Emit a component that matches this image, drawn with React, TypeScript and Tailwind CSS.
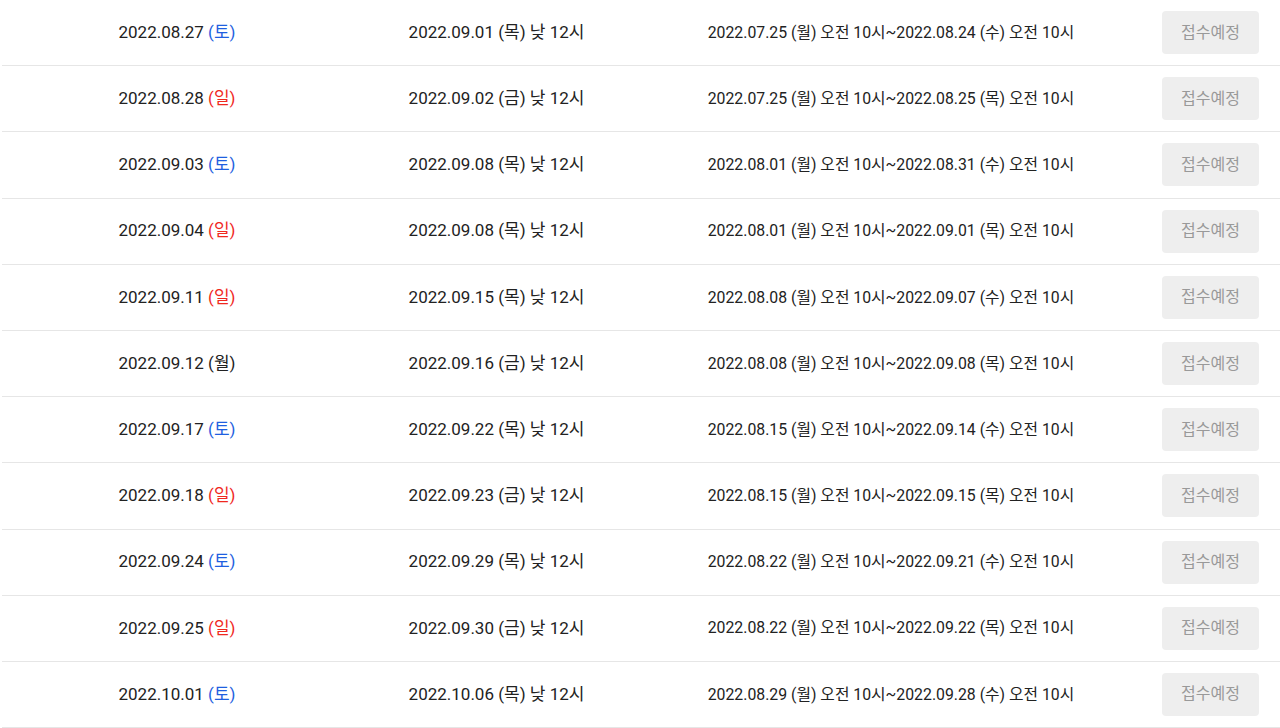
const rows = [
  ["2022.08.27", "토", "2022.09.01 (목) 낮 12시", "2022.07.25 (월) 오전 10시~2022.08.24 (수) 오전 10시"],
  ["2022.08.28", "일", "2022.09.02 (금) 낮 12시", "2022.07.25 (월) 오전 10시~2022.08.25 (목) 오전 10시"],
  ["2022.09.03", "토", "2022.09.08 (목) 낮 12시", "2022.08.01 (월) 오전 10시~2022.08.31 (수) 오전 10시"],
  ["2022.09.04", "일", "2022.09.08 (목) 낮 12시", "2022.08.01 (월) 오전 10시~2022.09.01 (목) 오전 10시"],
  ["2022.09.11", "일", "2022.09.15 (목) 낮 12시", "2022.08.08 (월) 오전 10시~2022.09.07 (수) 오전 10시"],
  ["2022.09.12", "월", "2022.09.16 (금) 낮 12시", "2022.08.08 (월) 오전 10시~2022.09.08 (목) 오전 10시"],
  ["2022.09.17", "토", "2022.09.22 (목) 낮 12시", "2022.08.15 (월) 오전 10시~2022.09.14 (수) 오전 10시"],
  ["2022.09.18", "일", "2022.09.23 (금) 낮 12시", "2022.08.15 (월) 오전 10시~2022.09.15 (목) 오전 10시"],
  ["2022.09.24", "토", "2022.09.29 (목) 낮 12시", "2022.08.22 (월) 오전 10시~2022.09.21 (수) 오전 10시"],
  ["2022.09.25", "일", "2022.09.30 (금) 낮 12시", "2022.08.22 (월) 오전 10시~2022.09.22 (목) 오전 10시"],
  ["2022.10.01", "토", "2022.10.06 (목) 낮 12시", "2022.08.29 (월) 오전 10시~2022.09.28 (수) 오전 10시"],
];

const dayColor = (d: string) =>
  d === "토" ? "text-[#1f5fe0]" : d === "일" ? "text-[#f0281e]" : "text-[#222]";

const App = () => {
  return (
    <div
      className="w-[1280px] h-[728px] overflow-hidden bg-white pl-[2px] text-[#222]"
      style={{ fontFamily: "Roboto, 'Noto Sans CJK KR', sans-serif" }}
    >
      {rows.map(([date, day, draw, period]) => (
        <div
          key={date}
          className="grid grid-cols-[350px_289px_500px_139px] items-center h-[66.2px] border-b border-[#e6e6e6]"
        >
          <div className="text-center text-[17px]">
            {date} <span className={dayColor(day)}>({day})</span>
          </div>
          <div className="text-center text-[17px]">{draw}</div>
          <div className="text-center text-[15.8px]">{period}</div>
          <div className="flex justify-center">
            <div className="w-[97px] h-[43px] rounded-[4px] bg-[#eeeeee] text-[#999] text-[16px] flex items-center justify-center">
              접수예정
            </div>
          </div>
        </div>
      ))}
    </div>
  );
};

export default App;
